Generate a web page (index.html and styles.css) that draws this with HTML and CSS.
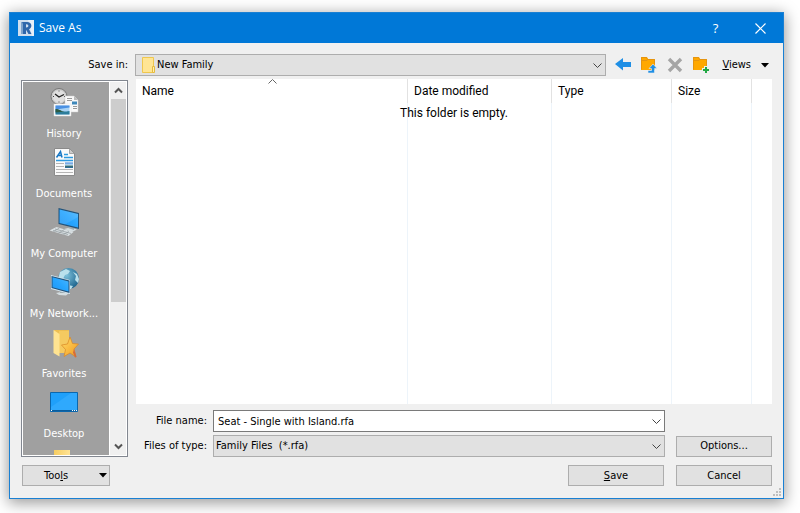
FILE: index.html
```html
<!DOCTYPE html>
<html lang="en">
<head>
<meta charset="utf-8">
<meta name="viewport" content="width=device-width, initial-scale=1">
<title>Save As</title>
<link rel="stylesheet" href="styles.css">
</head>
<body>
<svg width="0" height="0" class="defs" aria-hidden="true">
  <defs>
    <linearGradient id="screen" x1="0" y1="1" x2="1" y2="0"><stop offset="0" stop-color="#1e96f5"/><stop offset=".5" stop-color="#27a5ff"/><stop offset="1" stop-color="#4ab6ff"/></linearGradient>
    <linearGradient id="folder" x1="0" y1="0" x2="1" y2="0"><stop offset="0" stop-color="#f6cd62"/><stop offset="1" stop-color="#ffe394"/></linearGradient>
    <linearGradient id="photo" x1="0" y1="0" x2="0" y2="1"><stop offset="0" stop-color="#3f86dc"/><stop offset=".5" stop-color="#d8eefb"/><stop offset=".6" stop-color="#3a6b62"/><stop offset="1" stop-color="#2c6fa8"/></linearGradient>
    <radialGradient id="globe" cx=".4" cy=".35" r=".7"><stop offset="0" stop-color="#7cc0da"/><stop offset="1" stop-color="#1a628c"/></radialGradient>
    <linearGradient id="star" x1="0" y1="0" x2="1" y2="1"><stop offset="0" stop-color="#ffdc68"/><stop offset="1" stop-color="#f39a1e"/></linearGradient>
  </defs>
</svg>
<main class="dialog">
  <header class="titlebar">
    <svg class="logo" width="16" height="16" viewBox="0 0 16 16" aria-hidden="true">
      <rect width="16" height="16" fill="#cfdeee"/>
      <path d="M10 0h6v16h-2z" fill="#e6eff8"/>
      <path d="M3 2h2v12H3z" fill="#7ea3cc"/>
      <path d="M4 2h5c5.500 0 5.500 6 2 7.300L13.500 14h-3L8 9.700V14H5V4zM8 4.300v3.200c3.200.4 3.200-3.600 0-3.200z" fill="#2f67ab" fill-rule="evenodd"/>
    </svg>
    <h1 class="title">Save As</h1>
    <button class="caption-button" type="button" aria-label="Help">?</button>
    <button class="caption-button" type="button" aria-label="Close">
      <svg width="11" height="11" viewBox="0 0 11 11"><path d="M.5.5l10 10M10.500.5l-10 10" stroke="#fff" stroke-width="1.200"/></svg>
    </button>
  </header>

  <form class="content">
    <label class="save-in-label" for="save-in">Save in:</label>
    <div class="location">
      <div class="combo">
        <svg class="combo-icon" width="14" height="16" viewBox="0 0 14 16" aria-hidden="true">
          <path d="M.5.5h11v15H.5z" fill="#ffe594" stroke="#efc74e"/><path d="M10.500 9.500h2v6h-2z" fill="#ffefb0" stroke="#e6bb3c"/>
        </svg>
        <select id="save-in" class="field with-icon"><option>New Family</option></select>
        <svg class="chevron" width="9" height="6" viewBox="0 0 9 6" aria-hidden="true"><path d="M.5.5l4 4 4-4"/></svg>
      </div>
      <div class="tools">
        <button class="tool" type="button" aria-label="Back">
          <svg width="18" height="18" viewBox="0 0 18 18"><path d="M1 8l8-6v4h8v5H9v3.500z" fill="#1f8fe5"/></svg>
        </button>
        <button class="tool" type="button" aria-label="Up one level">
          <svg width="18" height="18" viewBox="0 0 18 18"><path d="M1 1h6l1 2h7v11H1z" fill="#ffa800"/><path d="M1.500 13.500v-12h5l1 2h7V8M2 4.500h5l1-1" fill="none" stroke="#e59410"/><path d="M13 8l4 4.500h-2.500V17H8v-2.500h3.500v-2H9z" fill="#1f8fe5" stroke="#efefef" stroke-width=".6"/></svg>
        </button>
        <button class="tool" type="button" aria-label="Delete">
          <svg width="18" height="18" viewBox="0 0 18 18"><path d="M3 3l12 12M15 3L3 15" stroke="#a5a5a5" stroke-width="3.400"/></svg>
        </button>
        <button class="tool" type="button" aria-label="New folder">
          <svg width="18" height="18" viewBox="0 0 18 18"><path d="M1 1h6l1 2h7v11H1z" fill="#ffa800"/><path d="M1.500 13.500v-12h5l1 2h7V10M2 4.500h5l1-1" fill="none" stroke="#e59410"/><path d="M14 10v8M10 14h8" stroke="#efefef" stroke-width="4"/><path d="M14 11v6M11 14h6" stroke="#22a845" stroke-width="2"/></svg>
        </button>
      </div>
      <button class="views" type="button"><span><u>V</u>iews</span>
        <svg width="8" height="5" viewBox="0 0 8 5"><path d="M0 0h8L4 4.500z"/></svg>
      </button>
    </div>

    <nav class="places" aria-label="Places">
      <div class="places-list">
        <a class="place" href="#history">
          <svg width="32" height="32" viewBox="0 0 32 32">
            <circle cx="11" cy="9.500" r="8" fill="#c9c9c9" stroke="#777"/><circle cx="11" cy="9.500" r="6.300" fill="#e0e0e0"/>
            <path d="M7 7l4 3 5-2.500" fill="none" stroke="#222" stroke-width="1.300"/><path d="M11 3.500v1M11 14.500v1M5 9.500h1M16 9.500h1" stroke="#444"/>
            <path d="M17 9h9l4 4v12H17z" fill="#fafafa" stroke="#ccc" stroke-width=".5"/><path d="M26 9v4h4z" fill="#bbb"/>
            <path d="M19 11.500h5M19 13.500h5M25 19.500h4M25 21.500h4" stroke="#999"/><path d="M24 14.500h5v3h-5z" fill="#3f88ba"/>
            <path d="M6 17h17v12H6z" fill="#fff" stroke="#ddd" stroke-width=".5"/><path d="M7.500 18.500h14v9h-14z" fill="#a9d3f5"/><path d="M7.500 18.500h14v2l-14 2z" fill="#4a90e2"/><path d="M7.500 22.500c4 0 5 2 8 2s3 0 6-.5v3.500h-14z" fill="#2c7d9b"/><path d="M7.500 22c4 0 5 2 9 2.500l-9 1z" fill="#2d5b45"/>
          </svg><span>History</span></a>
        <a class="place" href="#documents">
          <svg width="32" height="32" viewBox="0 0 32 32">
            <path d="M6.500 1.500h15l5 5v22h-20z" fill="#fafafa" stroke="#8a8a8a"/><path d="M21.500 1.500v5h5z" fill="#ccc" stroke="#888" stroke-width=".7"/>
            <path d="M8.500 10.500l4-6 1.500 6M10.500 8.500h3" fill="none" stroke="#1877c4" stroke-width="1.500"/><path d="M16 7.500h4M16 10.500h9M8 13.500h17" stroke="#2d9ae0" stroke-width="1.300"/>
            <path d="M8 16.500h8M8 19.500h8M8 22.500h17M8 25.500h17" stroke="#b5b5b5"/><path d="M17 15.500h8v5.500h-8z" fill="url(#photo)"/>
          </svg><span>Documents</span></a>
        <a class="place" href="#computer">
          <svg width="32" height="32" viewBox="0 0 32 32">
            <path d="M16 22l6-1.500 7 2-5 2.500z" fill="#d4dde0"/><path d="M21 19l5 2v2l-6-2z" fill="#9eabb0"/>
            <path d="M10.500 1l20.500 5v16l-20.500-5z" fill="#235278"/><path d="M11.500 2.500l18.500 4.500v13.500L11.500 16z" fill="url(#screen)"/><path d="M12 2.500l18 4.500v3L17 17.500l-5.500-1.500" fill="#fff" opacity=".1"/>
            <path d="M1.500 23.500l7-3.500 17 5-5 4z" fill="#d9e0e3"/><path d="M5 23.500l15 4M7 22l16 4.500M5.500 24.500l6-3.500M10.500 26l6-3.500M15.500 27.500l5.500-3" stroke="#98a1a5" stroke-width=".8"/>
          </svg><span>My Computer</span></a>
        <a class="place" href="#network">
          <svg width="32" height="32" viewBox="0 0 32 32">
            <circle cx="20.500" cy="11.500" r="10.500" fill="url(#globe)"/><path d="M12 5l6-3 4 2-2 3-3 1-2 4h-5zM25 5l4 2 2 5-1 4-3-3 1-4zM20 18l5 1-2 3h-4z" fill="#b9e0ec"/>
            <path d="M8 26l5-1 8 1-3 2.500-7-.5z" fill="#d4dde0"/><path d="M12 22l5 1v3h-5z" fill="#9eabb0"/>
            <path d="M3 8l19 5v14L3 22z" fill="#d5e5ef"/><path d="M3.500 9l18 4.500v12.500L3.500 21z" fill="#235278"/><path d="M4.500 10.300L20.500 14.500v10L4.500 20.300z" fill="url(#screen)"/>
          </svg><span>My Network...</span></a>
        <a class="place" href="#favorites">
          <svg width="32" height="32" viewBox="0 0 32 32">
            <path d="M6 3h15v23H6z" fill="#edbe52"/><path d="M11 4h10v22H11z" fill="#f5ca60"/><path d="M5.500 3l6 4v22.500l-6-3.500z" fill="#ffe391"/>
            <path d="M22 10l2.500 6.500 6 .5-4.500 5 2 8-6-4-6 3.500 1.500-7-4-4.500 6-1z" fill="url(#star)" stroke="#d98724" stroke-width=".7"/><path d="M26 22l2.500 8-1.500.5-2-5z" fill="#d66b3c"/>
          </svg><span>Favorites</span></a>
        <a class="place" href="#desktop">
          <svg width="32" height="32" viewBox="0 0 32 32">
            <path d="M2.500 5.500h27v19h-27z" fill="#1fa0fa" stroke="#0b67ad"/><path d="M3 20L23 6h6v17H3z" fill="#3cb0ff" opacity=".55"/><path d="M3 23.500h26" stroke="#0b5c9b"/><path d="M24 23.500h1M26 23.500h1M28 23.500h1M3 23.500h1" stroke="#fff"/>
          </svg><span>Desktop</span></a>
        <a class="place" href="#folder" aria-label="Folder">
          <svg width="32" height="32" viewBox="0 0 32 32"><path d="M6 3h16v25H6z" fill="url(#folder)"/></svg></a>
      </div>
      <div class="scrollbar" aria-hidden="true">
        <svg class="scroll-arrow" width="9" height="7" viewBox="0 0 9 7"><path d="M1 5.500L4.500 2 8 5.500"/></svg>
        <div class="track"><div class="thumb"></div></div>
        <svg class="scroll-arrow" width="9" height="7" viewBox="0 0 9 7"><path d="M1 1.500L4.500 5 8 1.500"/></svg>
      </div>
    </nav>

    <div class="browser">
      <div class="file-list">
        <table class="files">
          <colgroup><col><col class="col-date"><col class="col-type"><col class="col-size"><col class="col-rest"></colgroup>
          <thead><tr><th>Name<svg class="sort" width="9" height="5" viewBox="0 0 9 5" aria-hidden="true"><path d="M.5 4.500l4-4 4 4"/></svg></th><th>Date modified</th><th>Type</th><th>Size</th><th></th></tr></thead>
          <tbody><tr><td></td><td></td><td></td><td></td><td></td></tr></tbody>
        </table>
        <p class="empty">This folder is empty.</p>
      </div>
      <div class="fields">
        <label for="file-name">File name:</label>
        <div class="combo">
          <input id="file-name" class="field editable" type="text" value="Seat - Single with Island.rfa">
          <svg class="chevron" width="9" height="6" viewBox="0 0 9 6" aria-hidden="true"><path d="M.5.5l4 4 4-4"/></svg>
        </div>
        <span></span>
        <label for="file-type">Files of type:</label>
        <div class="combo">
          <select id="file-type" class="field"><option>Family Files&nbsp; (*.rfa)</option></select>
          <svg class="chevron" width="9" height="6" viewBox="0 0 9 6" aria-hidden="true"><path d="M.5.5l4 4 4-4"/></svg>
        </div>
        <button class="button" type="button">Options...</button>
      </div>
    </div>

    <footer class="actions">
      <button class="button tools-menu" type="button"><span>Too<u>l</u>s</span>
        <svg width="8" height="5" viewBox="0 0 8 5"><path d="M0 0h8L4 4.500z"/></svg>
      </button>
      <button class="button" type="button"><span><u>S</u>ave</span></button>
      <button class="button" type="button">Cancel</button>
    </footer>
  </form>
  <svg class="grip" width="8" height="8" viewBox="0 0 8 8" aria-hidden="true"><path d="M6 0h2v2H6zM3 3h2v2H3zM6 3h2v2H6zM0 6h2v2H0zM3 6h2v2H3zM6 6h2v2H6z" fill="#bfbfbf"/></svg>
</main>
</body>
</html>
```
FILE: styles.css
```css
* { box-sizing: border-box; }

body {
  display: flex;
  height: 100vh;
  margin: 0;
  padding: 12px 16px 14px 9px;
  overflow: hidden;
  background: #fff;
  color: #000;
  font: 11px/16px "DejaVu Sans Condensed", sans-serif;
}

button, input, select { font: inherit; color: inherit; }
button { padding: 0; border: 0; background: none; }
svg { display: block; flex: none; }
.defs { position: absolute; }

.dialog {
  position: relative;
  display: flex;
  flex: 1;
  flex-direction: column;
  min-width: 0;
  border: 1px solid #1a80d3;
  background: #f0f0f0;
  box-shadow: 0 3px 14px 1px rgba(0, 0, 0, .4);
}

.titlebar {
  display: flex;
  align-items: center;
  height: 30px;
  padding-left: 8px;
  background: #0078d7;
  color: #fff;
  font-family: "Open Sans", sans-serif;
}
.title {
  flex: 1;
  margin: 0 0 0 5px;
  font-size: 12px;
  font-weight: 400;
}
.caption-button {
  display: grid;
  place-items: center;
  width: 45px;
  height: 30px;
  font-size: 13px;
}

.content {
  display: grid;
  flex: 1;
  grid-template: 22px minmax(0, 1fr) 21px / 107px minmax(0, 1fr);
  column-gap: 7px;
  min-height: 0;
  padding: 11px 11px 12px;
}
.save-in-label { align-self: center; text-align: right; }

.location { display: flex; align-items: center; }
.location .combo { flex: 1; }
.tools { display: flex; gap: 8px; margin-left: 8px; }
.tool { width: 18px; height: 18px; }
.views {
  display: flex;
  align-items: center;
  gap: 10px;
  margin: 0 3px 0 12px;
}

.combo { position: relative; }
.field {
  display: block;
  width: 100%;
  height: 22px;
  padding: 0 20px 0 2px;
  border: 1px solid #adadad;
  border-radius: 0;
  outline: 0;
  appearance: none;
  background: #e1e1e1;
}
.with-icon { padding-left: 21px; }
.editable { padding-left: 4px; border-color: #7a7a7a; background: #fff; }
.combo-icon { position: absolute; top: 3px; left: 7px; }
.chevron {
  position: absolute;
  top: 9px;
  right: 4px;
  fill: none;
  stroke: #444;
  pointer-events: none;
}

.places {
  display: flex;
  min-height: 0;
  margin-top: 4px;
  border: 1px solid #828790;
  background: #fff;
  padding: 1px;
}
.places-list {
  flex: 1;
  padding-right: 4px;
  overflow: hidden;
  background: #a0a0a0;
}
.place {
  display: flex;
  flex-direction: column;
  align-items: center;
  gap: 7px;
  height: 60px;
  padding-top: 5px;
  color: #fff;
  text-decoration: none;
}
.scrollbar {
  display: flex;
  flex-direction: column;
  align-items: center;
  width: 17px;
  background: #f0f0f0;
  border-left: 1px solid #fff;
}
.track { flex: 1; width: 15px; }
.thumb { height: 60%; background: #cdcdcd; }
.scroll-arrow { margin: 5px 0; fill: none; stroke: #555; stroke-width: 2; }

.browser { display: flex; flex-direction: column; margin-top: 3px; min-height: 0; }
.file-list {
  position: relative;
  flex: 1;
  margin-left: 1px;
  background: #fff;
  font-family: Roboto, sans-serif;
}
.files {
  width: 100%;
  height: 100%;
  border-collapse: separate;
  border-spacing: 0;
  table-layout: fixed;
  font-size: 12px;
}
.files th {
  position: relative;
  height: 24px;
  padding: 0 6px;
  border-right: 1px solid #e2e2e2;
  font-weight: 400;
  text-align: left;
}
.files td { padding: 0; border-right: 1px solid #edf4fa; }
.files th:last-child, .files td:last-child { border-right: 0; }
.col-date { width: 144px; }
.col-type { width: 120px; }
.col-size { width: 80px; }
.col-rest { width: 20px; }
.sort { position: absolute; top: 0; left: 50%; margin-left: -4px; fill: none; stroke: #666; }
.empty {
  position: absolute;
  top: 26px;
  left: 0;
  width: 100%;
  margin: 0;
  font-size: 12px;
  text-align: center;
}

.fields {
  display: grid;
  grid-template-columns: 72px minmax(0, 1fr) 96px;
  align-items: center;
  column-gap: 6px;
  row-gap: 3px;
  margin-top: 6px;
}
.fields label { text-align: right; }
.fields .combo { margin-right: 5px; }

.button {
  height: 21px;
  border: 1px solid #adadad;
  background: #e1e1e1;
  text-align: center;
}

.actions {
  display: flex;
  grid-column: 1 / -1;
  gap: 12px;
  padding-left: 1px;
}
.places, .browser { margin-bottom: 8px; }
.actions .button { width: 96px; }
.actions .tools-menu {
  display: flex;
  align-items: center;
  justify-content: space-between;
  width: 88px;
  margin-right: auto;
  padding: 0 2px 0 21px;
}

.grip { position: absolute; right: 2px; bottom: 2px; }
```
